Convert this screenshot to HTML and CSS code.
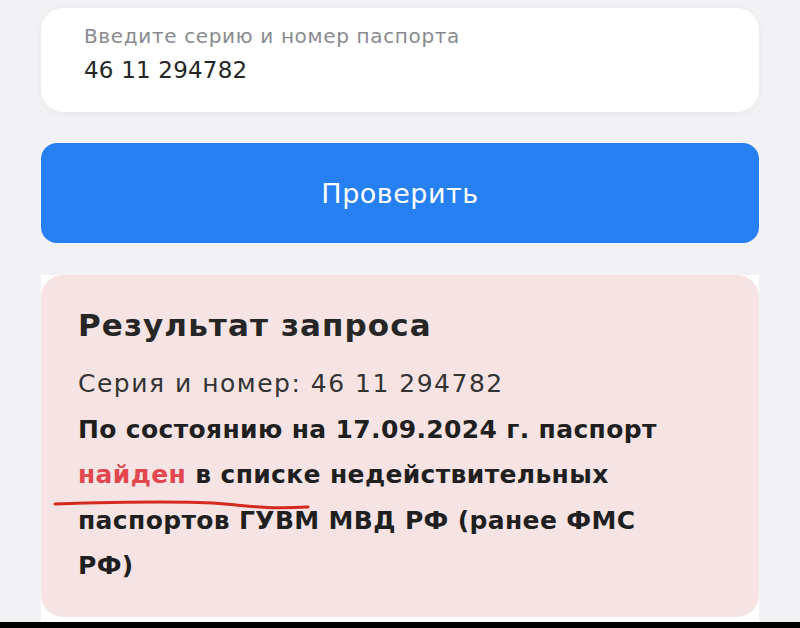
FILE: index.html
```html
<!DOCTYPE html>
<html lang="ru">
<head>
    <meta charset="UTF-8">
    <meta name="viewport" content="width=device-width, initial-scale=1.0">
    <title>Проверка паспорта</title>
    <link rel="stylesheet" href="styles.css">
</head>
<body>
    <div class="page">
        <div class="field">
            <label class="field-label" for="passport">Введите серию и номер паспорта</label>
            <input class="field-input" id="passport" type="text" value="46 11 294782">
        </div>

        <button class="check-btn">Проверить</button>

        <div class="result-wrap">
            <div class="result">
                <h2 class="result-title">Результат запроса</h2>
                <p class="result-number">Серия и номер: 46 11 294782</p>
                <p class="result-text">
                    По состоянию на 17.09.2024 г. паспорт
                    <span class="found">найден</span> в списке недействительных
                    паспортов ГУВМ МВД РФ (ранее ФМС РФ)
                </p>
                <!-- подчёркивание от руки -->
                <svg class="scribble" width="300" height="20" viewBox="0 0 300 20">
                    <path d="M4 7 C 69 5, 139 4, 174 7 S 219 12, 257 10" fill="none" stroke="#d42a1e" stroke-width="3" stroke-linecap="round"/>
                </svg>
            </div>
        </div>
    </div>
    <div class="bottom-bar"></div>
</body>
</html>
```
FILE: styles.css
```css
body {
    margin: 0;
    font-family: "DejaVu Sans", Inter, sans-serif;
    background-color: #f2f2f5;
    color: #222;
    height: 628px;
    display: flex;
    flex-direction: column;
    overflow: hidden;
}

.page {
    flex: 1;
    padding: 8px 41px 0;
    display: flex;
    flex-direction: column;
}

.field {
    background-color: #fff;
    border-radius: 22px;
    height: 104px;
    box-sizing: border-box;
    padding: 16px 43px 0;
    box-shadow: 0 1px 6px rgba(0, 0, 0, 0.05);
    display: flex;
    flex-direction: column;
}

.field-label {
    font-size: 20px;
    letter-spacing: 0.65px;
    color: #8a8a8e;
    line-height: 24px;
}

.field-input {
    border: none;
    outline: none;
    padding: 0;
    margin-top: 9px;
    font-family: inherit;
    font-size: 23px;
    letter-spacing: 0.2px;
    color: #262626;
    background: transparent;
}

.check-btn {
    margin-top: 31px;
    height: 100px;
    border: none;
    border-radius: 16px;
    background-color: #2680f1;
    color: #fff;
    font-family: inherit;
    font-size: 27px;
    letter-spacing: 0.5px;
}

.result-wrap {
    margin-top: 32px;
    flex: 1;
    background-color: #fff;
}

.result {
    position: relative;
    height: 342px;
    box-sizing: border-box;
    background-color: #f6e4e5;
    border-radius: 22px;
    padding: 30px 80px 0 37px;
}

.result-title {
    margin: 0 0 16px;
    font-size: 31px;
    font-weight: 700;
    letter-spacing: 1.1px;
    color: #262626;
    line-height: 40px;
}

.result-number,
.result-text {
    margin: 0;
    font-size: 25px;
    line-height: 45.5px;
}

.result-number {
    color: #333;
    letter-spacing: 1.5px;
}

.result-text {
    font-weight: 700;
    letter-spacing: 0.35px;
    color: #1f1f1f;
}

.found {
    color: #e2474f;
}

.scribble {
    position: absolute;
    left: 10px;
    top: 222px;
}

.bottom-bar {
    height: 6px;
    background-color: #000;
}
```
